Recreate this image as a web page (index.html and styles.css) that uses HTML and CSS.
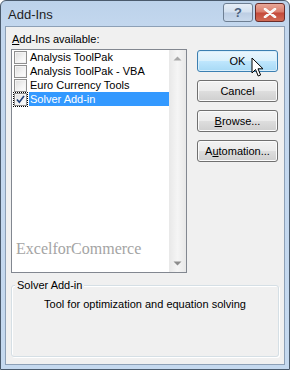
FILE: index.html
```html
<!DOCTYPE html>
<html>
<head>
<meta charset="utf-8">
<link rel="stylesheet" href="styles.css">
</head>
<body>
<div class="window">
  <div class="titlebar">
    <span class="title">Add-Ins</span>
    <div class="caption-btns">
      <div class="cap help">?</div>
      <div class="cap close">
        <svg width="14" height="10" viewBox="0 0 14 10"><path d="M2 1 L12 9 M12 1 L2 9" stroke="#ffffff" stroke-width="2.6" stroke-linecap="round"/><path d="M2 1 L12 9 M12 1 L2 9" stroke="#f4f4f4" stroke-width="1.4" stroke-linecap="round"/></svg>
      </div>
    </div>
  </div>
  <div class="client">
    <div class="label"><u>A</u>dd-Ins available:</div>
    <div class="main">
      <div class="listbox">
        <div class="items">
          <div class="item"><span class="cb"></span><span class="txt">Analysis ToolPak</span></div>
          <div class="item"><span class="cb"></span><span class="txt">Analysis ToolPak - VBA</span></div>
          <div class="item"><span class="cb"></span><span class="txt">Euro Currency Tools</span></div>
          <div class="item selected"><span class="cb checked"><svg width="11" height="11" viewBox="0 0 11 11"><path d="M2 5.5 L4.3 8.3 L9 2" fill="none" stroke="#21407a" stroke-width="1.6"/></svg></span><span class="txt">Solver Add-in</span></div>
          <div class="watermark">ExcelforCommerce</div>
        </div>
        <div class="scrollbar">
          <svg class="arr" width="9" height="5" viewBox="0 0 9 5"><path d="M0.5 4.5 L4.5 0.5 L8.5 4.5 Z" fill="#a8a8a8"/></svg>
          <svg class="arr" width="9" height="5" viewBox="0 0 9 5"><path d="M0.5 0.5 L4.5 4.5 L8.5 0.5 Z" fill="#8c8c8c"/></svg>
        </div>
      </div>
      <div class="buttons">
        <div class="btn default">OK</div>
        <div class="btn">Cancel</div>
        <div class="btn"><u>B</u>rowse...</div>
        <div class="btn">A<u>u</u>tomation...</div>
      </div>
    </div>
    <div class="group">
      <div class="legend">Solver Add-in</div>
      <div class="desc">Tool for optimization and equation solving</div>
    </div>
  </div>
  <svg class="cursor" width="14" height="21" viewBox="0 0 14 21"><path d="M1 1 L1 16 L4.5 12.5 L7.2 19 L9.6 18 L7 11.8 L12 11.8 Z" fill="#ffffff" stroke="#000000" stroke-width="1" stroke-linejoin="miter"/></svg>
</div>
</body>
</html>
```
FILE: styles.css
```css
html, body {
  margin: 0;
  padding: 0;
  background: #ffffff;
}
body {
  font-family: "Liberation Sans", "DejaVu Sans", sans-serif;
  font-size: 11px;
  color: #000;
}
.window {
  position: relative;
  box-sizing: border-box;
  width: 290px;
  height: 370px;
  border: 1px solid #4a5a6c;
  border-radius: 6px 6px 0 0;
  background: linear-gradient(to bottom, #bcd2ea 0px, #c3d7ee 25px, #c5d9ef 100%);
  padding: 0 4px 4px 4px;
  display: flex;
  flex-direction: column;
  overflow: hidden;
}
.titlebar {
  height: 25px;
  display: flex;
  align-items: flex-start;
  justify-content: space-between;
  flex: none;
}
.title {
  font-family: "Liberation Sans", sans-serif;
  font-size: 13px;
  margin: 6px 0 0 3px;
  color: #1e1e1e;
}
.caption-btns {
  display: flex;
  gap: 2px;
  margin-top: 2px;
}
.cap {
  box-sizing: border-box;
  height: 19px;
  border: 1px solid #6e7f93;
  border-radius: 3px;
  display: flex;
  align-items: center;
  justify-content: center;
}
.help {
  width: 30px;
  background: linear-gradient(to bottom, #e6eef7 0%, #d3e0ef 48%, #bccde3 52%, #c9d9ec 100%);
  font-family: "Liberation Sans", sans-serif;
  font-size: 13px;
  font-weight: bold;
  color: #4a5f7c;
}
.close {
  width: 30px;
  border-color: #6a2d2a;
  background: linear-gradient(to bottom, #e8a798 0%, #d97c6c 48%, #c4493a 52%, #d06a55 100%);
}
.client {
  flex: 1;
  background: #f0f0f0;
  border: 1px solid #8da0b6;
  display: flex;
  flex-direction: column;
  padding: 0 5px 7px 5px;
}
.label {
  margin-top: 5px;
  height: 15px;
  line-height: 15px;
  padding-left: 1px;
}
.main {
  display: flex;
  gap: 10px;
  margin-top: 2px;
}
.listbox {
  box-sizing: border-box;
  width: 176px;
  height: 224px;
  border: 1px solid #828790;
  background: #ffffff;
  display: flex;
}
.items {
  flex: 1;
  display: flex;
  flex-direction: column;
}
.item {
  height: 14px;
  display: flex;
  align-items: center;
}
.cb {
  box-sizing: border-box;
  width: 13px;
  height: 13px;
  margin-left: 2px;
  margin-right: 2px;
  border: 1px solid #8f8f8f;
  background: linear-gradient(135deg, #dcdcdc 0%, #f4f4f4 60%, #ffffff 100%);
  box-shadow: inset 0 0 0 1px #f4f4f4;
  display: flex;
  align-items: center;
  justify-content: center;
}
.item.selected .cb {
  outline: 1px dotted #000;
}
.txt {
  height: 14px;
  line-height: 14px;
  padding: 0 1px;
  flex: 1;
}
.item.selected .txt {
  background: #3399ff;
  color: #ffffff;
}
.watermark {
  margin-top: 134px;
  margin-left: 4px;
  font-family: "Liberation Serif", serif;
  font-size: 16px;
  color: #a4a4a4;
}
.scrollbar {
  width: 17px;
  background: linear-gradient(to right, #e8e8e8, #f5f5f5 50%, #e8e8e8);
  display: flex;
  flex-direction: column;
  justify-content: space-between;
  align-items: center;
  padding: 6px 0;
  box-sizing: border-box;
}
.buttons {
  display: flex;
  flex-direction: column;
  gap: 8px;
  padding-top: 1px;
}
.btn {
  box-sizing: border-box;
  width: 81px;
  height: 22px;
  border: 1px solid #707070;
  border-radius: 3px;
  background: linear-gradient(to bottom, #f2f2f2 0%, #ebebeb 48%, #dddddd 52%, #cfcfcf 100%);
  box-shadow: inset 0 0 0 1px #fbfbfb;
  display: flex;
  align-items: center;
  justify-content: center;
}
.btn.default {
  border-color: #3c7fb1;
  background: linear-gradient(to bottom, #eaf6fd 0%, #d9f0fc 48%, #bee6fd 52%, #a7d9f5 100%);
  box-shadow: inset 0 0 0 1px #d8eefb;
}
.group {
  margin-top: 12px;
  position: relative;
  flex: 1;
  border: 1px solid #d5dfe5;
  border-radius: 3px;
  box-shadow: inset 1px 1px 0 #ffffff, 1px 1px 0 #ffffff;
}
.legend {
  position: absolute;
  top: -8px;
  left: 3px;
  padding: 0 2px;
  background: #f0f0f0;
  line-height: 14px;
}
.desc {
  text-align: center;
  margin-top: 12px;
}
.cursor {
  position: absolute;
  left: 250px;
  top: 56px;
}
```
